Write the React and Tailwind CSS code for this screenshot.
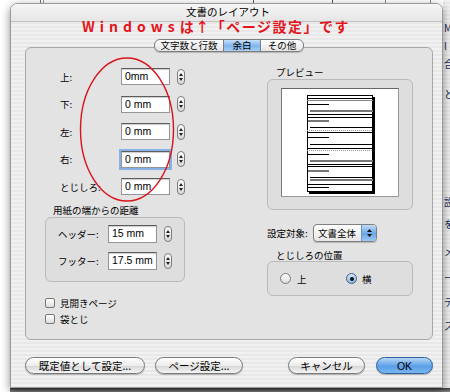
import React from 'react';

const stripes =
  'bg-[image:repeating-linear-gradient(180deg,#f1f1f1_0px,#f1f1f1_2px,#e8e8e8_2px,#e8e8e8_4px)]';

const Stepper = () => (
  <div className="w-[8px] h-[16px] rounded-full border border-[#7b7b7b] bg-[linear-gradient(#ffffff,#d9d9d9)] flex flex-col items-center justify-center gap-[2px] shrink-0">
    <svg width="4" height="3" viewBox="0 0 4 3"><path d="M2 0L4 3H0Z" fill="#222" /></svg>
    <svg width="4" height="3" viewBox="0 0 4 3"><path d="M0 0H4L2 3Z" fill="#222" /></svg>
  </div>
);

const Field = ({ value, focus, h = 'h-[17px]' }) => (
  <div
    className={`w-[49px] ${h} shrink-0 overflow-hidden whitespace-nowrap bg-white border border-[#959595] border-t-[#5c5c5c] shadow-[inset_0_1px_1px_rgba(0,0,0,0.2)] pl-[3px] text-[10.5px] leading-[14px] text-black font-['Liberation_Sans',sans-serif] ${
      focus ? 'outline-2 outline-[#86b2e6]' : ''
    }`}
  >
    {value}
  </div>
);

const MarginRow = ({ label, value, focus }) => (
  <div className="flex items-center h-[17px]">
    <span className="ml-[15px] w-[61px] text-[9.5px] leading-[12px]">{label}</span>
    <Field value={value} focus={focus} />
    <div className="ml-[7px]">
      <Stepper />
    </div>
  </div>
);

const Checkbox = ({ label }) => (
  <div className="flex items-center h-[10px]">
    <div className="w-[10px] h-[10px] rounded-[2px] border border-[#777] bg-[linear-gradient(#ffffff,#dedede)]" />
    <span className="ml-[5px] text-[9.5px] leading-[10px]">{label}</span>
  </div>
);

const Button = ({ children, className, primary }) => (
  <div
    className={`h-[17px] rounded-full flex items-center justify-center text-[10.5px] leading-[12px] shadow-[0_1px_1px_rgba(0,0,0,0.25)] ${
      primary
        ? 'border border-[#2f5f98] bg-[linear-gradient(#b6d7f7,#5a9fe6_55%,#7ab6f0)] text-black'
        : 'border border-[#7a7a7a] bg-[linear-gradient(#ffffff,#ececec_50%,#d8d8d8_55%,#f4f4f4)] text-black'
    } ${className}`}
  >
    {children}
  </div>
);

const lines = [
  [3, 0, 66, '#000', 1],
  [5, 0, 66, '#888', 1],
  [9, 1, 22, '#000', 1],
  [16, 3, 66, '#777', 2],
  [19, 0, 66, '#000', 1],
  [22, 0, 66, '#000', 1],
  [26, 1, 22, '#777', 2],
  [32, 3, 66, '#000', 1],
  [35, 0, 66, '#999', 1, '1 1'],
  [37, 0, 66, '#000', 1],
  [42, 1, 22, '#000', 1],
  [49, 3, 66, '#000', 1],
  [53, 0, 66, '#000', 1],
  [55, 0, 66, '#999', 1, '1 1'],
  [59, 1, 22, '#000', 1],
  [66, 3, 66, '#777', 2],
  [69, 0, 66, '#000', 1],
  [71, 0, 66, '#000', 1],
  [76, 1, 22, '#777', 2],
  [82, 3, 66, '#000', 1],
  [85, 3, 66, '#777', 2],
  [89, 0, 66, '#000', 1],
  [92, 1, 22, '#000', 1],
];

const PagePreview = () => (
  <svg width="69" height="100" viewBox="0 0 69 100">
    <rect x="2" y="2" width="66" height="97" fill="#000" />
    <rect x="0.5" y="0.5" width="65" height="96" fill="#fff" stroke="#000" />
    {lines.map(([y, x1, x2, c, w, d], i) => (
      <line
        key={i}
        x1={x1}
        x2={x2}
        y1={y + (w === 2 ? 0 : 0.5)}
        y2={y + (w === 2 ? 0 : 0.5)}
        stroke={c}
        strokeWidth={w}
        strokeDasharray={d}
      />
    ))}
  </svg>
);

export default function App() {
  return (
    <div className="relative w-[450px] h-[392px] overflow-hidden bg-white text-black font-['Noto_Sans_CJK_JP',sans-serif]">
      {/* window behind, peeking out on top, right and bottom */}
      <div className="absolute left-[40px] top-0 w-[1px] h-[3px] bg-[#777]" />
      <div className="absolute left-[43px] top-0 w-[1px] h-[3px] bg-[#999]" />
      <div className="absolute left-[253px] top-0 w-[80px] h-[4px] border-x border-b border-[#555]" />
      <div className="absolute left-[385px] top-0 w-[1px] h-[3px] bg-[#888]" />
      <div className="absolute left-[430px] top-0 w-[1px] h-[3px] bg-[#888]" />
      <div className={`absolute left-[443px] top-0 w-[7px] h-[392px] overflow-hidden ${stripes}`}>
        <div className="flex flex-col ml-[1px] text-[10px] leading-[12px] text-[#1a2a5a]">
          <span className="mt-[22px]">M</span>
          <span className="mt-[6px]">l</span>
          <span className="mt-[6px]">合</span>
          <span className="mt-[18px]">と</span>
          <span className="mt-[96px]">設</span>
          <span className="mt-[10px]">を</span>
          <span className="mt-[16px]">メ</span>
          <span className="mt-[14px]">ー</span>
          <span className="mt-[12px]">テ</span>
          <span className="mt-[12px]">ス</span>
        </div>
      </div>
      <div className="absolute left-[10px] top-[388px] w-[440px] h-[4px] bg-[linear-gradient(#3a3a3a,#8a8a8a)]" />

      {/* dialog window */}
      <div
        className={`relative ml-[10px] mt-[3px] w-[433px] h-[385px] rounded-t-[7px] border border-[#9a9a9a] ${stripes} shadow-[0_3px_10px_rgba(0,0,0,0.45)] flex flex-col`}
      >
        <div className="h-[18px] flex items-start justify-center pt-[2px] pl-[3px] border-b border-[#c2c2c2] rounded-t-[6px] bg-[linear-gradient(#f6f6f6,#e6e6e6)] text-[10.5px] leading-[12px]">
          文書のレイアウト
        </div>

        {/* tabs */}
        <div className="relative z-10 mt-[17px] flex justify-center pl-[5px]">
          <div className="flex h-[13px] rounded-[6px] border border-[#7d7d7d] overflow-hidden bg-[linear-gradient(#ffffff,#e4e4e4)] text-[9.5px] leading-[11px] shadow-[0_1px_1px_rgba(0,0,0,0.2)]">
            <div className="w-[68px] flex items-center justify-center">文字数と行数</div>
            <div className="w-[38px] flex items-center justify-center border-x border-[#7d7d7d] bg-[linear-gradient(#c6e0fa,#7eb4ec_55%,#a9d0f6)]">
              余白
            </div>
            <div className="w-[42px] flex items-center justify-center">その他</div>
          </div>
        </div>

        {/* tab panel */}
        <div className="-mt-[5px] ml-[14px] w-[408px] h-[293px] shrink-0 rounded-[6px] border border-[#a8a8a8] bg-[#e3e3e3] flex">
          <div className="ml-[19px] w-[140px] flex flex-col">
            <div className="pt-[20px] flex flex-col gap-[10.5px]">
              <MarginRow label="上:" value="0mm" />
              <MarginRow label="下:" value="0 mm" />
              <MarginRow label="左:" value="0 mm" />
              <MarginRow label="右:" value="0 mm" focus />
              <MarginRow label="とじしろ:" value="0 mm" />
            </div>

            <div className="mt-[9px] pl-[8px] h-[12px] text-[9.5px] leading-[12px]">用紙の端からの距離</div>
            <div className="mt-[1px] h-[65px] rounded-[6px] border border-[#bababa] bg-[#dedede] pt-[7px] flex flex-col gap-[9px]">
              {[
                ['ヘッダー:', '15 mm'],
                ['フッター:', '17.5 mm'],
              ].map(([l, v]) => (
                <div key={l} className="flex items-center h-[18px]">
                  <span className="ml-[12px] w-[50px] text-[9.5px] leading-[12px]">{l}</span>
                  <Field value={v} h="h-[18px]" />
                  <div className="ml-[7px]">
                    <Stepper />
                  </div>
                </div>
              ))}
            </div>

            <div className="mt-[16px] flex flex-col gap-[6px]">
              <Checkbox label="見開きページ" />
              <Checkbox label="袋とじ" />
            </div>
          </div>

          <div className="ml-[82px] w-[146px] flex flex-col">
            <div className="pt-[18px] pl-[9px] h-[30px] text-[9.5px] leading-[12px]">プレビュー</div>
            <div className="mt-[1px] h-[131px] rounded-[6px] border border-[#bababa] bg-[#dedede] pl-[13px] pt-[8px]">
              <div className="w-[118px] h-[109px] bg-white border border-[#999] border-t-[#666] border-l-[#777] pl-[25px] pt-[6px]">
                <PagePreview />
              </div>
            </div>

            <div className="mt-[14px] flex items-center h-[18px]">
              <span className="w-[46px] text-[9.5px] leading-[12px]">設定対象:</span>
              <div className="w-[64px] h-[18px] rounded-[4px] border border-[#808080] bg-[linear-gradient(#ffffff,#e6e6e6)] flex overflow-hidden shadow-[0_1px_1px_rgba(0,0,0,0.2)]">
                <span className="flex-1 pl-[4px] text-[9.5px] leading-[16px]">文書全体</span>
                <div className="w-[15px] border-l border-[#6d8fb8] bg-[linear-gradient(#bfdcf8,#6aa6e8_55%,#9cc8f2)] flex flex-col items-center justify-center gap-[2px]">
                  <svg width="5" height="3" viewBox="0 0 5 3"><path d="M2.5 0L5 3H0Z" fill="#111" /></svg>
                  <svg width="5" height="3" viewBox="0 0 5 3"><path d="M0 0H5L2.5 3Z" fill="#111" /></svg>
                </div>
              </div>
            </div>

            <div className="mt-[7px] pl-[9px] h-[12px] text-[9.5px] leading-[12px]">とじしろの位置</div>
            <div className="h-[35px] rounded-[6px] border border-[#bababa] bg-[#dedede] pl-[12px] flex items-center">
              <div className="w-[66px] flex items-center">
                <div className="w-[11px] h-[11px] rounded-full border border-[#777] bg-[linear-gradient(#ffffff,#dcdcdc)]" />
                <span className="ml-[6px] text-[9.5px] leading-[12px]">上</span>
              </div>
              <div className="flex items-center">
                <div className="w-[11px] h-[11px] rounded-full border border-[#3f5f8c] bg-[linear-gradient(#d5e6f8,#8fb6e2)] flex items-center justify-center">
                  <div className="w-[4px] h-[4px] rounded-full bg-[#111]" />
                </div>
                <span className="ml-[5px] text-[9.5px] leading-[12px]">横</span>
              </div>
            </div>
          </div>
        </div>

        {/* bottom buttons */}
        <div className="mt-[17px] ml-[14px] mr-[9px] flex items-center">
          <Button className="w-[120px]">既定値として設定...</Button>
          <Button className="ml-[10px] w-[88px]">ページ設定...</Button>
          <div className="flex-1" />
          <Button className="w-[77px]">キャンセル</Button>
          <Button className="ml-[11px] w-[57px] font-['Liberation_Sans',sans-serif]" primary>
            OK
          </Button>
        </div>
      </div>

      {/* red annotations */}
      <div className="absolute left-[82px] top-[19px] text-[14px] leading-[14px] text-[#e3141c] font-bold whitespace-nowrap">
        <span className="tracking-[5px]">Windows</span>
        <span className="tracking-[1.5px]">は↑「ページ設定」です</span>
      </div>
      <svg className="absolute left-[76px] top-[55px]" width="104" height="150" viewBox="0 0 104 150">
        <ellipse cx="51" cy="74.5" rx="46.5" ry="71.5" fill="none" stroke="#d8131b" strokeWidth="1.4" />
      </svg>
    </div>
  );
}
